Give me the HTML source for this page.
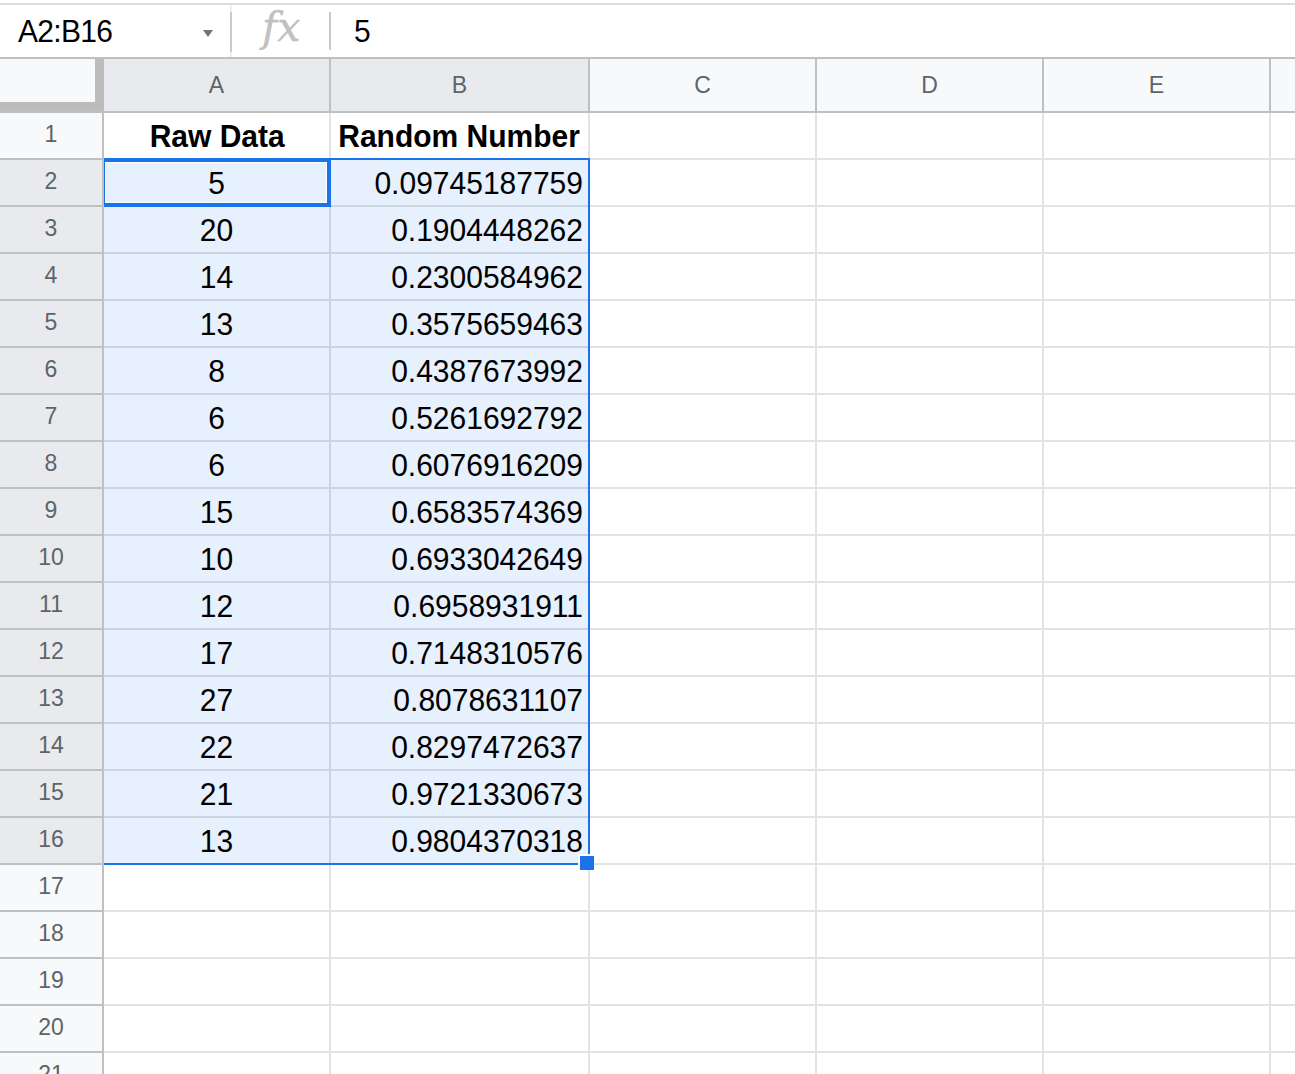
<!DOCTYPE html>
<html lang="en"><head><meta charset="utf-8"><title>Sheet</title>
<style>
*{margin:0;padding:0;box-sizing:border-box}
html,body{width:1295px;height:1074px;overflow:hidden;background:#fff}
body{position:relative;font-family:"Liberation Sans",sans-serif;color:#000}
.abs{position:absolute}
.topline{left:0;top:3px;width:1295px;height:2px;background:#dcdde1}
.nb{left:18px;top:14px;transform:scaleY(1.05);transform-origin:50% 50%;font-size:30px;line-height:34px;color:#000;white-space:nowrap;letter-spacing:-0.7px}
.tri{left:203px;top:30px;width:0;height:0;border-left:5.5px solid transparent;border-right:5.5px solid transparent;border-top:7px solid #747474}
.sep1{left:230px;top:5px;width:2px;height:52px;background:#efefef}
.sep1b{left:230px;top:12px;width:2px;height:40px;background:#c9c9c9}
.sep2{left:329px;top:12px;width:2px;height:38px;background:#c9c9c9}
.fx{left:262px;top:3px;font-family:"DejaVu Serif","Liberation Serif",serif;font-style:italic;font-size:41px;line-height:48px;color:#bfc0c2;-webkit-text-stroke:0.35px #bfc0c2;white-space:nowrap;letter-spacing:0px}
.fval{left:354px;top:14px;transform:scaleY(1.05);transform-origin:50% 50%;font-size:30px;line-height:34px;white-space:nowrap}
.hl{background:#c0c0c0}
.gl{background:#e2e3e3}
.chead{top:59px;height:52px;background:#f8f9fa;font-size:23px;line-height:52px;text-align:center;color:#5f6368}
.chead.sel{background:#e8eaed}
.rhead{left:0;width:102px;height:45px;background:#f8f9fa;font-size:23px;line-height:43px;text-align:center;color:#5f6368}
.rhead.sel{background:#e8eaed}
.cell{height:45px;font-size:30px;line-height:45px;white-space:nowrap;overflow:hidden;transform:scaleY(1.07);transform-origin:50% 50%}
.c{text-align:center}
.r{text-align:right;padding-right:5px}
.b{font-weight:bold;transform:translate(-0.4px,0.7px) scaleY(1.055)}
.b1{transform:translate(0.7px,0.7px) scaleY(1.055)}
.selbg{background:#e7f0fd}
.blue{background:#1a73e8}
</style></head>
<body>
<div class="abs topline"></div>
<div class="abs nb">A2:B16</div>
<div class="abs tri"></div>
<div class="abs sep1"></div>
<div class="abs sep1b"></div>
<div class="abs fx">fx</div>
<div class="abs sep2"></div>
<div class="abs fval">5</div>
<div class="abs hl" style="left:0;top:57px;width:1295px;height:2px"></div>
<div class="abs chead sel" style="left:104px;width:225px">A</div>
<div class="abs chead sel" style="left:331px;width:257px">B</div>
<div class="abs chead" style="left:590px;width:225px">C</div>
<div class="abs chead" style="left:817px;width:225px">D</div>
<div class="abs chead" style="left:1044px;width:225px">E</div>
<div class="abs chead" style="left:1271px;width:24px"></div>
<div class="abs hl" style="left:0;top:111px;width:1295px;height:2px"></div>
<div class="abs hl" style="left:329px;top:59px;width:2px;height:52px"></div>
<div class="abs hl" style="left:588px;top:59px;width:2px;height:52px"></div>
<div class="abs hl" style="left:815px;top:59px;width:2px;height:52px"></div>
<div class="abs hl" style="left:1042px;top:59px;width:2px;height:52px"></div>
<div class="abs hl" style="left:1269px;top:59px;width:2px;height:52px"></div>
<div class="abs" style="left:0;top:59px;width:95px;height:43px;background:#f8f9fa"></div>
<div class="abs" style="left:95px;top:59px;width:9px;height:52px;background:#bcbcbc"></div>
<div class="abs" style="left:0;top:102px;width:104px;height:9px;background:#bcbcbc"></div>
<div class="abs selbg" style="left:104px;top:160px;width:484px;height:703px"></div>
<div class="abs gl" style="left:329px;top:113px;width:2px;height:961px"></div>
<div class="abs gl" style="left:588px;top:113px;width:2px;height:961px"></div>
<div class="abs gl" style="left:815px;top:113px;width:2px;height:961px"></div>
<div class="abs gl" style="left:1042px;top:113px;width:2px;height:961px"></div>
<div class="abs gl" style="left:1269px;top:113px;width:2px;height:961px"></div>
<div class="abs rhead" style="top:113px">1</div>
<div class="abs hl" style="left:0;top:158px;width:102px;height:2px"></div>
<div class="abs gl" style="left:104px;top:158px;width:1191px;height:2px"></div>
<div class="abs rhead sel" style="top:160px">2</div>
<div class="abs hl" style="left:0;top:205px;width:102px;height:2px"></div>
<div class="abs gl" style="left:104px;top:205px;width:1191px;height:2px"></div>
<div class="abs rhead sel" style="top:207px">3</div>
<div class="abs hl" style="left:0;top:252px;width:102px;height:2px"></div>
<div class="abs gl" style="left:104px;top:252px;width:1191px;height:2px"></div>
<div class="abs rhead sel" style="top:254px">4</div>
<div class="abs hl" style="left:0;top:299px;width:102px;height:2px"></div>
<div class="abs gl" style="left:104px;top:299px;width:1191px;height:2px"></div>
<div class="abs rhead sel" style="top:301px">5</div>
<div class="abs hl" style="left:0;top:346px;width:102px;height:2px"></div>
<div class="abs gl" style="left:104px;top:346px;width:1191px;height:2px"></div>
<div class="abs rhead sel" style="top:348px">6</div>
<div class="abs hl" style="left:0;top:393px;width:102px;height:2px"></div>
<div class="abs gl" style="left:104px;top:393px;width:1191px;height:2px"></div>
<div class="abs rhead sel" style="top:395px">7</div>
<div class="abs hl" style="left:0;top:440px;width:102px;height:2px"></div>
<div class="abs gl" style="left:104px;top:440px;width:1191px;height:2px"></div>
<div class="abs rhead sel" style="top:442px">8</div>
<div class="abs hl" style="left:0;top:487px;width:102px;height:2px"></div>
<div class="abs gl" style="left:104px;top:487px;width:1191px;height:2px"></div>
<div class="abs rhead sel" style="top:489px">9</div>
<div class="abs hl" style="left:0;top:534px;width:102px;height:2px"></div>
<div class="abs gl" style="left:104px;top:534px;width:1191px;height:2px"></div>
<div class="abs rhead sel" style="top:536px">10</div>
<div class="abs hl" style="left:0;top:581px;width:102px;height:2px"></div>
<div class="abs gl" style="left:104px;top:581px;width:1191px;height:2px"></div>
<div class="abs rhead sel" style="top:583px">11</div>
<div class="abs hl" style="left:0;top:628px;width:102px;height:2px"></div>
<div class="abs gl" style="left:104px;top:628px;width:1191px;height:2px"></div>
<div class="abs rhead sel" style="top:630px">12</div>
<div class="abs hl" style="left:0;top:675px;width:102px;height:2px"></div>
<div class="abs gl" style="left:104px;top:675px;width:1191px;height:2px"></div>
<div class="abs rhead sel" style="top:677px">13</div>
<div class="abs hl" style="left:0;top:722px;width:102px;height:2px"></div>
<div class="abs gl" style="left:104px;top:722px;width:1191px;height:2px"></div>
<div class="abs rhead sel" style="top:724px">14</div>
<div class="abs hl" style="left:0;top:769px;width:102px;height:2px"></div>
<div class="abs gl" style="left:104px;top:769px;width:1191px;height:2px"></div>
<div class="abs rhead sel" style="top:771px">15</div>
<div class="abs hl" style="left:0;top:816px;width:102px;height:2px"></div>
<div class="abs gl" style="left:104px;top:816px;width:1191px;height:2px"></div>
<div class="abs rhead sel" style="top:818px">16</div>
<div class="abs hl" style="left:0;top:863px;width:102px;height:2px"></div>
<div class="abs gl" style="left:104px;top:863px;width:1191px;height:2px"></div>
<div class="abs rhead" style="top:865px">17</div>
<div class="abs hl" style="left:0;top:910px;width:102px;height:2px"></div>
<div class="abs gl" style="left:104px;top:910px;width:1191px;height:2px"></div>
<div class="abs rhead" style="top:912px">18</div>
<div class="abs hl" style="left:0;top:957px;width:102px;height:2px"></div>
<div class="abs gl" style="left:104px;top:957px;width:1191px;height:2px"></div>
<div class="abs rhead" style="top:959px">19</div>
<div class="abs hl" style="left:0;top:1004px;width:102px;height:2px"></div>
<div class="abs gl" style="left:104px;top:1004px;width:1191px;height:2px"></div>
<div class="abs rhead" style="top:1006px">20</div>
<div class="abs hl" style="left:0;top:1051px;width:102px;height:2px"></div>
<div class="abs gl" style="left:104px;top:1051px;width:1191px;height:2px"></div>
<div class="abs rhead" style="top:1053px">21</div>
<div class="abs hl" style="left:0;top:1098px;width:102px;height:2px"></div>
<div class="abs gl" style="left:104px;top:1098px;width:1191px;height:2px"></div>
<div class="abs hl" style="left:102px;top:112px;width:2px;height:962px"></div>
<div class="abs" style="left:329px;top:160px;width:2px;height:703px;background:#cbd5e2"></div>
<div class="abs" style="left:104px;top:205px;width:484px;height:2px;background:#cbd5e2"></div>
<div class="abs" style="left:104px;top:252px;width:484px;height:2px;background:#cbd5e2"></div>
<div class="abs" style="left:104px;top:299px;width:484px;height:2px;background:#cbd5e2"></div>
<div class="abs" style="left:104px;top:346px;width:484px;height:2px;background:#cbd5e2"></div>
<div class="abs" style="left:104px;top:393px;width:484px;height:2px;background:#cbd5e2"></div>
<div class="abs" style="left:104px;top:440px;width:484px;height:2px;background:#cbd5e2"></div>
<div class="abs" style="left:104px;top:487px;width:484px;height:2px;background:#cbd5e2"></div>
<div class="abs" style="left:104px;top:534px;width:484px;height:2px;background:#cbd5e2"></div>
<div class="abs" style="left:104px;top:581px;width:484px;height:2px;background:#cbd5e2"></div>
<div class="abs" style="left:104px;top:628px;width:484px;height:2px;background:#cbd5e2"></div>
<div class="abs" style="left:104px;top:675px;width:484px;height:2px;background:#cbd5e2"></div>
<div class="abs" style="left:104px;top:722px;width:484px;height:2px;background:#cbd5e2"></div>
<div class="abs" style="left:104px;top:769px;width:484px;height:2px;background:#cbd5e2"></div>
<div class="abs" style="left:104px;top:816px;width:484px;height:2px;background:#cbd5e2"></div>
<div class="abs cell c b b1" style="left:104px;top:113px;width:225px">Raw Data</div>
<div class="abs cell c b" style="left:331px;top:113px;width:257px">Random Number</div>
<div class="abs cell c" style="left:104px;top:160px;width:225px">5</div>
<div class="abs cell r" style="left:331px;top:160px;width:257px">0.09745187759</div>
<div class="abs cell c" style="left:104px;top:207px;width:225px">20</div>
<div class="abs cell r" style="left:331px;top:207px;width:257px">0.1904448262</div>
<div class="abs cell c" style="left:104px;top:254px;width:225px">14</div>
<div class="abs cell r" style="left:331px;top:254px;width:257px">0.2300584962</div>
<div class="abs cell c" style="left:104px;top:301px;width:225px">13</div>
<div class="abs cell r" style="left:331px;top:301px;width:257px">0.3575659463</div>
<div class="abs cell c" style="left:104px;top:348px;width:225px">8</div>
<div class="abs cell r" style="left:331px;top:348px;width:257px">0.4387673992</div>
<div class="abs cell c" style="left:104px;top:395px;width:225px">6</div>
<div class="abs cell r" style="left:331px;top:395px;width:257px">0.5261692792</div>
<div class="abs cell c" style="left:104px;top:442px;width:225px">6</div>
<div class="abs cell r" style="left:331px;top:442px;width:257px">0.6076916209</div>
<div class="abs cell c" style="left:104px;top:489px;width:225px">15</div>
<div class="abs cell r" style="left:331px;top:489px;width:257px">0.6583574369</div>
<div class="abs cell c" style="left:104px;top:536px;width:225px">10</div>
<div class="abs cell r" style="left:331px;top:536px;width:257px">0.6933042649</div>
<div class="abs cell c" style="left:104px;top:583px;width:225px">12</div>
<div class="abs cell r" style="left:331px;top:583px;width:257px">0.6958931911</div>
<div class="abs cell c" style="left:104px;top:630px;width:225px">17</div>
<div class="abs cell r" style="left:331px;top:630px;width:257px">0.7148310576</div>
<div class="abs cell c" style="left:104px;top:677px;width:225px">27</div>
<div class="abs cell r" style="left:331px;top:677px;width:257px">0.8078631107</div>
<div class="abs cell c" style="left:104px;top:724px;width:225px">22</div>
<div class="abs cell r" style="left:331px;top:724px;width:257px">0.8297472637</div>
<div class="abs cell c" style="left:104px;top:771px;width:225px">21</div>
<div class="abs cell r" style="left:331px;top:771px;width:257px">0.9721330673</div>
<div class="abs cell c" style="left:104px;top:818px;width:225px">13</div>
<div class="abs cell r" style="left:331px;top:818px;width:257px">0.9804370318</div>
<div class="abs blue" style="left:104px;top:158px;width:486px;height:2px"></div>
<div class="abs blue" style="left:104px;top:863px;width:486px;height:2px"></div>
<div class="abs blue" style="left:588px;top:158px;width:2px;height:707px"></div>
<div class="abs" style="left:104px;top:158px;width:227px;height:49px;border:solid #1a73e8;border-width:4px 4px 4px 1px;box-shadow:inset 0 1px 0 rgba(255,255,255,.85),inset 0 -1px 0 rgba(255,255,255,.85),inset -1px 0 0 rgba(255,255,255,.85),inset 1px 0 0 rgba(255,255,255,.4)"></div>
<div class="abs" style="left:578px;top:854px;width:16px;height:16px;background:#fff"></div>
<div class="abs blue" style="left:580px;top:856px;width:14px;height:14px"></div>
</body></html>
